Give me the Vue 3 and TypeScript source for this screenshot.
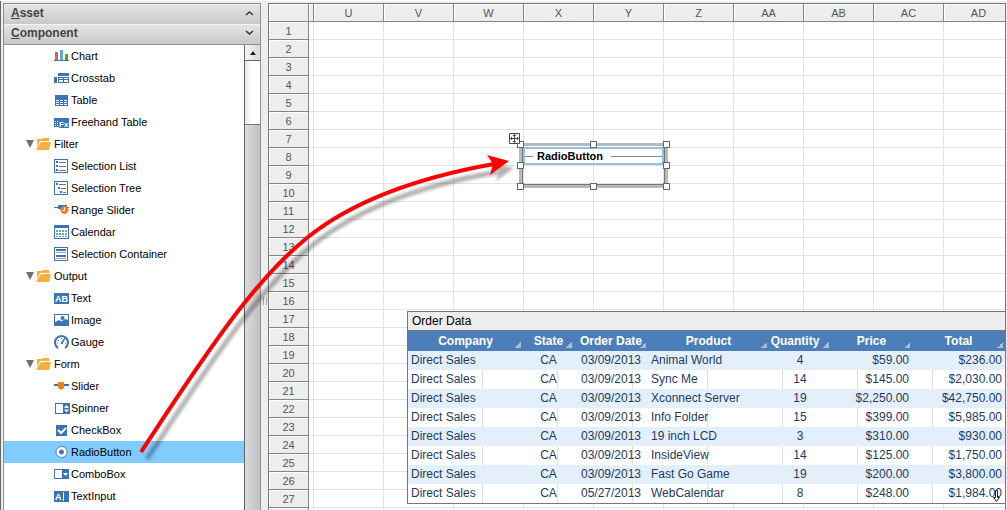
<script setup lang="ts">
import { ref } from 'vue'

interface Shape {
  d: string
  fill?: string
  stroke?: string
  width?: number
  smooth?: boolean
}
interface Glyph {
  shapes: Shape[]
  text?: string
  textX?: number
  textY?: number
  size?: number
}
interface Entry {
  label: string
  icon: string
  folder?: boolean
}

const B = '#3b74b4'
const G = '#6f7480'

const icons: Record<string, Glyph> = {
  chart: {
    shapes: [
      { d: 'M1 4h3v8H1z', fill: '#e15759' },
      { d: 'M6 2h3v10H6z', fill: '#6aa0d4' },
      { d: 'M11 6h3v6h-3z', fill: '#4fa32d' },
      { d: 'M0 12h15v1H0z', fill: B },
    ],
  },
  crosstab: {
    shapes: [
      { d: 'M4 3h11v3H4zM0 7h3v6H0zM4 7h11v6H4z', fill: B },
      { d: 'M5 8h4v1H5zM10 8h4v1h-4zM5 10h4v2H5zM10 10h4v2h-4z', fill: '#fff' },
    ],
  },
  table: {
    shapes: [
      { d: 'M1 3h13v11H1z', fill: B },
      { d: 'M2 8h3v1H2zM6 8h3v1H6zM10 8h3v1h-3zM2 10h3v1H2zM6 10h3v1H6zM10 10h3v1h-3zM2 12h3v1H2zM6 12h3v1H6zM10 12h3v1h-3z', fill: '#fff' },
    ],
  },
  freehand: {
    shapes: [
      { d: 'M0 4h15v3H0zM0 7h5v6H0zM5 6h10v8H5z', fill: B },
      { d: 'M1 7h1v1H1zM3 7h1v1H3zM1 9h1v1H1zM3 9h1v1H3zM1 11h1v1H1zM3 11h1v1H3z', fill: '#fff' },
    ],
    text: 'Fx', textX: 5, textY: 13, size: 8,
  },
  folder: {
    shapes: [
      { d: 'M1 3h5l1-1h6v3H4L1 11z', fill: '#f5b040', smooth: true },
      { d: 'M4 7l2-1h9l-2 8H0z', fill: '#f5b040', smooth: true },
    ],
  },
  list: {
    shapes: [
      { d: 'M.5 1.5h13v13H.5z', fill: '#fff', stroke: B },
      { d: 'M2 3h2v2H2zM2 7h2v2H2zM2 11h2v2H2z', fill: B },
      { d: 'M5 4h7v1H5zM5 8h7v1H5zM5 12h7v1H5z', fill: G },
    ],
  },
  tree: {
    shapes: [
      { d: 'M.5 1.5h13v13H.5z', fill: '#fff', stroke: B },
      { d: 'M2 3h2v2H2zM4 7h2v2H4zM6 11h2v2H6z', fill: B },
      { d: 'M5 4h7v1H5zM7 8h5v1H7zM9 12h3v1H9z', fill: G },
    ],
  },
  range: {
    shapes: [
      { d: 'M0 5h15v1H0z', fill: B },
      { d: 'M4 3h9v5H8L4 7z', fill: B },
      { d: 'M10.500 4a4 4 0 1 0 .01 0z', fill: '#ee8512', smooth: true },
      { d: 'M10.500 5.500v3H8.500', fill: 'none', stroke: '#fff', smooth: true },
    ],
  },
  calendar: {
    shapes: [
      { d: 'M.5 1.5h14v13H.5z', fill: '#fff', stroke: B },
      { d: 'M0 1h15v3H0z', fill: B },
      { d: 'M2 6h2v2H2zM5 6h2v2H5zM8 6h2v2H8zM11 6h2v2h-2zM2 9h2v2H2zM5 9h2v2H5zM8 9h2v2H8zM11 9h2v2h-2zM2 12h2v1H2zM5 12h2v1H5zM8 12h2v1H8zM11 12h2v1h-2z', fill: '#6f9dce' },
    ],
  },
  container: {
    shapes: [
      { d: 'M.5 1.5h13v13H.5z', fill: '#fff', stroke: B },
      { d: 'M2 3h10v2H2zM2 9h10v2H2z', fill: B },
      { d: 'M2 6h10v1H2zM2 12h10v1H2z', fill: '#9a9fa8' },
    ],
  },
  text: { shapes: [{ d: 'M0 3h15v11H0z', fill: B }], text: 'AB', textX: 1, textY: 12, size: 9 },
  image: {
    shapes: [
      { d: 'M0 2h15v12H0z', fill: B },
      { d: 'M1 3h13v5l-2 1-3 1-4-2-4 2z', fill: '#fff', smooth: true },
      { d: 'M8.500 4a2 2 0 1 0 .01 0z', fill: B, smooth: true },
      { d: 'M8 9l3-2 3 1v3H8z', fill: B, smooth: true },
    ],
  },
  gauge: {
    shapes: [
      { d: 'M4 14A6.500 6.500 0 1 1 11 14', fill: 'none', stroke: B, width: 2, smooth: true },
      { d: 'M7 9l4-5-3 6z', fill: B, stroke: B, smooth: true },
      { d: 'M3 9h1M4 6l1 1M7.500 4v1M11 9h1', fill: 'none', stroke: G, smooth: true },
    ],
  },
  slider: {
    shapes: [
      { d: 'M0 6h15v2H0z', fill: B },
      { d: 'M4 4h6v6l-3 2-3-2z', fill: '#ee8512', smooth: true },
    ],
  },
  spinner: {
    shapes: [
      { d: 'M1.500 3.500h14v10h-14z', fill: '#fff', stroke: B },
      { d: 'M9 3h7v11H9z', fill: B },
      { d: 'M10 8l2.500-3L15 8zM10 9.500h5l-2.500 3z', fill: '#fff', smooth: true },
    ],
  },
  check: {
    shapes: [
      { d: 'M2 3h11v11H2z', fill: B },
      { d: 'M4 8l3 3 5-5', fill: 'none', stroke: '#fff', width: 2, smooth: true },
    ],
  },
  radio: {
    shapes: [
      { d: 'M7.500 2.500a5.500 5.500 0 1 0 .01 0z', fill: '#fff', stroke: '#55779f', smooth: true },
      { d: 'M7.500 5.500a2.500 2.500 0 1 0 .01 0z', fill: B, smooth: true },
    ],
  },
  combo: {
    shapes: [
      { d: 'M.5 3.500h14v9H.5z', fill: '#fff', stroke: B },
      { d: 'M8 3h7v10H8z', fill: B },
      { d: 'M9 7h5l-2.500 3z', fill: '#fff', smooth: true },
    ],
  },
  input: {
    shapes: [
      { d: 'M0 3h15v11H0z', fill: B },
      { d: 'M9 4h1v9H9z', fill: '#fff' },
    ],
    text: 'A', textX: 1, textY: 12, size: 9,
  },
}

const entries: Entry[] = [
  { label: 'Chart', icon: 'chart' },
  { label: 'Crosstab', icon: 'crosstab' },
  { label: 'Table', icon: 'table' },
  { label: 'Freehand Table', icon: 'freehand' },
  { label: 'Filter', icon: 'folder', folder: true },
  { label: 'Selection List', icon: 'list' },
  { label: 'Selection Tree', icon: 'tree' },
  { label: 'Range Slider', icon: 'range' },
  { label: 'Calendar', icon: 'calendar' },
  { label: 'Selection Container', icon: 'container' },
  { label: 'Output', icon: 'folder', folder: true },
  { label: 'Text', icon: 'text' },
  { label: 'Image', icon: 'image' },
  { label: 'Gauge', icon: 'gauge' },
  { label: 'Form', icon: 'folder', folder: true },
  { label: 'Slider', icon: 'slider' },
  { label: 'Spinner', icon: 'spinner' },
  { label: 'CheckBox', icon: 'check' },
  { label: 'RadioButton', icon: 'radio' },
  { label: 'ComboBox', icon: 'combo' },
  { label: 'TextInput', icon: 'input' },
]
const selected = ref('RadioButton')

const letters = ['U', 'V', 'W', 'X', 'Y', 'Z', 'AA', 'AB', 'AC', 'AD']

const fields = ['Company', 'State', 'Order Date', 'Product', 'Quantity', 'Price', 'Total']
const orders: string[][] = [
  ['Direct Sales', 'CA', '03/09/2013', 'Animal World', '4', '$59.00', '$236.00'],
  ['Direct Sales', 'CA', '03/09/2013', 'Sync Me', '14', '$145.00', '$2,030.00'],
  ['Direct Sales', 'CA', '03/09/2013', 'Xconnect Server', '19', '$2,250.00', '$42,750.00'],
  ['Direct Sales', 'CA', '03/09/2013', 'Info Folder', '15', '$399.00', '$5,985.00'],
  ['Direct Sales', 'CA', '03/09/2013', '19 inch LCD', '3', '$310.00', '$930.00'],
  ['Direct Sales', 'CA', '03/09/2013', 'InsideView', '14', '$125.00', '$1,750.00'],
  ['Direct Sales', 'CA', '03/09/2013', 'Fast Go Game', '19', '$200.00', '$3,800.00'],
  ['Direct Sales', 'CA', '05/27/2013', 'WebCalendar', '8', '$248.00', '$1,984.00'],
]
const handles = ['nw', 'n', 'ne', 'w', 'e', 'sw', 's', 'se']
</script>

<template>
  <div class="app">
    <aside class="sidebar">
      <div class="panel">
        <button class="section" type="button">
          <span><u>A</u>sset</span>
          <svg width="9" height="6" viewBox="0 0 9 6"><path d="M1 5l3.500-3L8 5" /></svg>
        </button>
        <button class="section" type="button">
          <span><u>C</u>omponent</span>
          <svg width="9" height="6" viewBox="0 0 9 6"><path d="M1 1l3.500 3L8 1" /></svg>
        </button>
        <div class="browser">
          <ul class="tree">
            <li v-for="e in entries" :key="e.label">
              <button
                type="button"
                class="entry"
                :class="{ folder: e.folder, active: e.label === selected }"
                @click="selected = e.label"
              >
                <svg v-if="e.folder" class="twisty" width="8" height="8" viewBox="0 0 8 8">
                  <path d="M0 0h8L4 8z" fill="#6e6e6e" />
                </svg>
                <svg class="icon" width="16" height="16" viewBox="0 0 16 16">
                  <path
                    v-for="(s, i) in icons[e.icon].shapes"
                    :key="i"
                    :d="s.d"
                    :fill="s.fill"
                    :stroke="s.stroke"
                    :stroke-width="s.width ?? 1"
                    :shape-rendering="s.smooth ? 'auto' : 'crispEdges'"
                  />
                  <text
                    v-if="icons[e.icon].text"
                    :x="icons[e.icon].textX"
                    :y="icons[e.icon].textY"
                    :font-size="icons[e.icon].size"
                    fill="#fff"
                    font-weight="bold"
                  >{{ icons[e.icon].text }}</text>
                </svg>
                <span>{{ e.label }}</span>
              </button>
            </li>
          </ul>
          <div class="scrollbar">
            <button type="button" class="up" aria-label="Scroll up">
              <svg width="6" height="4" viewBox="0 0 6 4"><path d="M0 4l3-4 3 4z" fill="#222" /></svg>
            </button>
            <div class="thumb"></div>
          </div>
        </div>
      </div>
    </aside>

    <div class="splitter"><i></i></div>

    <main class="sheet">
      <table class="grid">
        <colgroup>
          <col class="c-num" />
          <col class="c-gap" />
          <col v-for="l in letters" :key="l" class="c-cell" />
        </colgroup>
        <thead>
          <tr>
            <th></th>
            <th></th>
            <th v-for="l in letters" :key="l" scope="col">{{ l }}</th>
          </tr>
        </thead>
        <tbody>
          <tr v-for="n in 27" :key="n">
            <th scope="row">{{ n }}</th>
            <td></td>
            <td v-for="l in letters" :key="l"></td>
          </tr>
          <tr>
            <th></th>
            <td></td>
            <td v-for="l in letters" :key="l"></td>
          </tr>
        </tbody>
      </table>

      <div class="widget">
        <div class="caption"><span>RadioButton</span></div>
        <i v-for="h in handles" :key="h" class="handle" :class="h"></i>
        <svg class="mover" width="11" height="11" viewBox="0 0 11 11">
          <path d="M.5.5h10v10H.5z" fill="#fff" stroke="#444653" />
          <path d="M5.500 2v7M2 5.500h7" stroke="#444653" shape-rendering="crispEdges" />
          <path d="M5.500 1l2 2h-4zM5.500 10l2-2h-4zM1 5.500l2-2v4zM10 5.500l-2-2v4z" fill="#444653" />
        </svg>
      </div>

      <section class="orders">
        <h2>Order Data</h2>
        <table>
          <colgroup>
            <col class="w-company" />
            <col class="w-state" />
            <col class="w-date" />
            <col class="w-product" />
            <col class="w-quantity" />
            <col class="w-price" />
            <col class="w-total" />
          </colgroup>
          <thead>
            <tr>
              <th v-for="f in fields" :key="f" scope="col">{{ f }}</th>
            </tr>
          </thead>
          <tbody>
            <tr v-for="(row, r) in orders" :key="r">
              <td v-for="(v, c) in row" :key="c">{{ v }}</td>
            </tr>
          </tbody>
        </table>
        <svg class="pointer" width="7" height="12" viewBox="0 0 7 12">
          <path d="M2.500.5h2v7h2l-3 4-3-4h2z" fill="#fff" stroke="#222" />
        </svg>
      </section>
    </main>

    <svg class="arrow" width="540" height="510" viewBox="0 0 540 510">
      <defs>
        <filter id="soft" x="-10%" y="-10%" width="120%" height="120%">
          <feGaussianBlur stdDeviation="1.5" />
        </filter>
      </defs>
      <g transform="translate(6 7)" opacity="0.3" filter="url(#soft)">
        <path d="M141 452C168 411 200 361 235 315C258 285 282 258 308 237C352 202 415 178 492 165" fill="none" stroke="#000" stroke-width="5" />
        <path d="M508 161L487 156L493 165L490 174z" fill="#000" />
      </g>
      <path d="M141 452C168 411 200 361 235 315C258 285 282 258 308 237C352 202 415 178 494 164" fill="none" stroke="#f00" stroke-width="4" />
      <path d="M509 161L487 155L493 164L490 175z" fill="#f00" />
    </svg>
  </div>
</template>

<style>
body {
  margin: 0;
  background: #ededed;
}
</style>

<style scoped>
* {
  box-sizing: border-box;
}
.app {
  position: relative;
  display: flex;
  height: 100vh;
  overflow: hidden;
  padding: 2px 1px 0 0;
  border-top: 1px solid #fff;
  background: #ededed;
  font: 11px/14px "Liberation Sans", Arial, sans-serif;
  color: #000;
}
button {
  margin: 0;
  border: 0;
  padding: 0;
  font: inherit;
  color: inherit;
  text-align: left;
}
.sidebar {
  flex: none;
  width: 261px;
  margin-top: -2px;
  padding: 2px 0 0 2px;
  border-left: 1px solid #666;
}
.panel {
  display: flex;
  flex-direction: column;
  height: 100%;
  border: 1px solid #909090;
  border-bottom: 0;
}
.section {
  display: flex;
  flex: none;
  align-items: center;
  justify-content: space-between;
  height: 20px;
  padding: 0 6px 3px 7px;
  border-top: 1px solid #f4f4f4;
  background: linear-gradient(#e4e4e4, #c9c9c9);
  font-size: 12px;
  font-weight: bold;
  color: #444;
}
.section path {
  fill: none;
  stroke: #333;
  stroke-width: 1.5;
}
.browser {
  display: flex;
  flex: 1;
  min-height: 0;
  border-top: 1px solid #909090;
}
.tree {
  flex: 1;
  margin: 0;
  padding: 0;
  overflow: hidden;
  list-style: none;
  background: #fff;
}
.entry {
  display: flex;
  align-items: center;
  gap: 1px;
  width: 100%;
  height: 22px;
  padding-left: 50px;
  background: none;
}
.entry.folder {
  padding-left: 22px;
}
.entry.active {
  background: #80cbff;
}
.twisty {
  margin-right: 1px;
}
.entry.folder .icon {
  margin-right: 1px;
}
.scrollbar {
  flex: none;
  display: flex;
  flex-direction: column;
  width: 16px;
  border-left: 1px solid #666;
  background: linear-gradient(90deg, #e6e6e6, #fff 6px);
}
.up {
  display: flex;
  align-items: center;
  justify-content: center;
  height: 16px;
  border-bottom: 1px solid #666;
  background: linear-gradient(90deg, #f6f6f6, #dadada);
}
.thumb {
  flex: 1;
  margin-top: 63px;
  border-top: 1px solid #777;
  background: linear-gradient(90deg, #dcdcdc, #cccdcf 8px, #bfc1c4);
}
.splitter {
  flex: none;
  display: flex;
  align-items: center;
  justify-content: center;
  width: 7px;
  padding-top: 88px;
}
.splitter i {
  width: 4px;
  height: 8px;
  border: solid #a5a5a5;
  border-width: 0 1px;
}
.sheet {
  position: relative;
  flex: 1;
  min-width: 0;
  overflow: hidden;
  border: 1px solid #777;
  border-bottom: 0;
  background: #fff;
}
.grid {
  width: 745px;
  table-layout: fixed;
  border-collapse: separate;
  border-spacing: 0;
  color: #555;
}
.c-num {
  width: 40px;
}
.c-gap {
  width: 5px;
}
.c-cell {
  width: 70px;
}
.grid th,
.grid td {
  height: 18px;
  padding: 0;
  border: solid #e3e3e3;
  border-width: 0 1px 1px 0;
}
.grid th {
  border-color: #858585;
  background: #ededed;
  box-shadow: inset 1px 1px 0 #fff;
  font-weight: normal;
}
.widget {
  position: absolute;
  left: 250px;
  top: 139px;
  width: 149px;
  height: 45px;
  padding: 1px;
  border: 3px solid #b9b9b9;
}
.widget::before {
  content: "";
  position: absolute;
  inset: 0;
  border: solid #777;
  border-width: 0 1px 1px;
}
.caption {
  position: relative;
  display: flex;
  align-items: center;
  gap: 8px;
  height: 18px;
  border: 2px solid #93bfeb;
  font-weight: bold;
}
.caption::before,
.caption::after {
  content: "";
  width: 8px;
  height: 1px;
  background: #888;
}
.caption::before {
  margin-right: -4px;
}
.caption::after {
  flex: 1;
}
.handle {
  position: absolute;
  width: 7px;
  height: 7px;
  border: 1px solid #666;
  background: #fff;
}
.nw,
.n,
.ne {
  top: -5px;
}
.w,
.e {
  top: 16px;
}
.sw,
.s,
.se {
  bottom: -5px;
}
.nw,
.w,
.sw {
  left: -5px;
}
.n,
.s {
  left: 68px;
}
.ne,
.e,
.se {
  right: -5px;
}
.mover {
  position: absolute;
  left: -13px;
  top: -13px;
}
.orders {
  position: absolute;
  left: 138px;
  right: 0;
  top: 307px;
  border: solid #777;
  border-width: 1px 0 1px 1px;
  background: repeating-linear-gradient(90deg, #fff 0 74px, #e0e0e0 74px 75px);
}
.orders h2 {
  height: 19px;
  margin: 0;
  padding-left: 4px;
  border-bottom: 1px solid #777;
  background: #ededed;
  font-size: 12px;
  line-height: 18px;
  font-weight: normal;
}
.orders table {
  width: 100%;
  table-layout: fixed;
  border-collapse: separate;
  border-spacing: 0;
  font-size: 12px;
  line-height: 14px;
  color: #1f3a5f;
}
.w-company {
  width: 115px;
}
.w-state {
  width: 51px;
}
.w-date {
  width: 74px;
}
.w-product {
  width: 121px;
}
.w-quantity {
  width: 62px;
}
.w-price {
  width: 81px;
}
.orders th {
  height: 20px;
  padding: 0 0 1px;
  background: linear-gradient(135deg, transparent 50%, #b0bdd0 50%) right 2px bottom 3px / 6px 6px no-repeat #4c7eba;
  color: #fff;
  white-space: nowrap;
}
.orders th:nth-child(5) {
  padding-right: 10px;
}
.orders td {
  height: 19px;
  padding: 0 3px 1px;
}
.orders tbody tr:nth-child(odd) {
  background: #e3effb;
}
.orders td:nth-child(2),
.orders td:nth-child(3),
.orders td:nth-child(5) {
  text-align: center;
}
.orders td:nth-child(n + 6) {
  text-align: right;
}
.pointer {
  position: absolute;
  right: 5px;
  bottom: 1px;
}
.arrow {
  position: absolute;
  left: 0;
  top: -1px;
  pointer-events: none;
}
</style>
